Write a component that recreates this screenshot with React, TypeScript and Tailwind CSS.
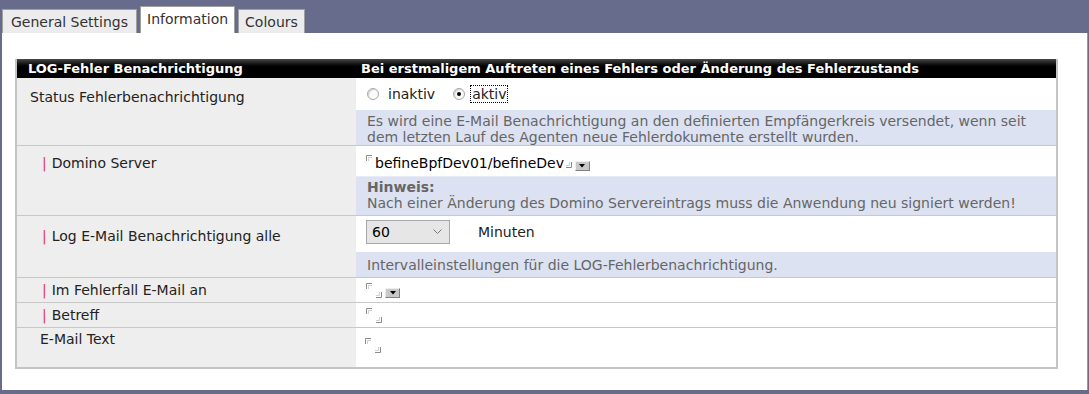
import React from 'react';

const font = { fontFamily: '"DejaVu Sans", Verdana, sans-serif' };

const TopMark = () => (
  <svg width="6" height="6" viewBox="0 0 6 6" className="block shrink-0">
    <path d="M0.5 6V0.5H6" fill="none" stroke="#8a8a8a" />
    <path d="M2.5 6V2.5H6" fill="none" stroke="#d0d0d0" />
  </svg>
);

const EndMark = () => (
  <svg width="6" height="6" viewBox="0 0 6 6" className="block shrink-0">
    <path d="M0 5.5H5.5V0" fill="none" stroke="#8a8a8a" />
    <path d="M0 3.5H3.5V0" fill="none" stroke="#d0d0d0" />
  </svg>
);

const DropBtn = () => (
  <span className="flex items-center justify-center w-[15px] h-[10px] bg-[#c8c8c8] border border-t-[#eeeeee] border-l-[#eeeeee] border-r-[#808080] border-b-[#808080] shrink-0">
    <svg width="6" height="4" viewBox="0 0 6 4" className="block">
      <path d="M0 0H6L3 3.5Z" fill="#000" />
    </svg>
  </span>
);

const EmptyField = ({ drop }: { drop?: boolean }) => (
  <div className="flex h-[15px]">
    <div className="self-start">
      <TopMark />
    </div>
    <div className="self-end ml-[4px]">
      <EndMark />
    </div>
    {drop && (
      <div className="self-end ml-[3px]">
        <DropBtn />
      </div>
    )}
  </div>
);

const Req = () => <span className="text-[#e0405a] mr-[5px]">|</span>;

const Radio = ({ checked }: { checked?: boolean }) => (
  <span className="inline-flex items-center justify-center w-[12px] h-[12px] rounded-full border border-[#a8a8a8] bg-[#fafafa] shadow-[inset_1px_1px_1px_#d0d0d0]">
    {checked && <span className="w-[4px] h-[4px] rounded-full bg-black" />}
  </span>
);

const Desc = ({ children, className = '' }: { children: React.ReactNode; className?: string }) => (
  <div className={`bg-[#dce2f1] text-[#666] text-[14px] leading-[16px] pl-[11px] ${className}`}>{children}</div>
);

const Label = ({ children, className = '' }: { children: React.ReactNode; className?: string }) => (
  <div className={`w-[339px] shrink-0 bg-[#eeeeee] text-[14px] leading-[16px] ${className}`}>{children}</div>
);

export default function App() {
  return (
    <div className="w-[1089px] h-[394px] bg-[#686c8c] overflow-hidden text-[#222]" style={font}>
      {/* Tabs */}
      <div className="flex items-end h-[33px] pl-[2px] gap-[3px]">
        <div className="h-[24px] px-[8px] bg-[#ececec] border border-b-0 border-[#a0a0a0] text-[14px] leading-[24px] text-[#333]">
          General Settings
        </div>
        <div className="h-[27px] px-[6px] bg-white border border-b-0 border-[#a0a0a0] text-[14px] leading-[24px] text-[#333]">
          Information
        </div>
        <div className="h-[24px] px-[6px] bg-[#ececec] border border-b-0 border-[#a0a0a0] text-[14px] leading-[24px] text-[#333]">
          Colours
        </div>
      </div>

      {/* Panel */}
      <div className="ml-[2px] w-[1086px] h-[357px] bg-white border-r border-[#9a9a9a] pt-[26px] pl-[13px]">
        <div className="w-[1043px] border-l-2 border-r-2 border-b-2 border-[#c4c4c4]">
          {/* Header */}
          <div className="flex h-[19px] bg-gradient-to-b from-[#4a4a4a] via-black to-black text-white font-bold text-[13px] leading-[19px]">
            <div className="w-[339px] pl-[11px]">LOG-Fehler Benachrichtigung</div>
            <div className="flex-1 pl-[5px]">Bei erstmaligem Auftreten eines Fehlers oder Änderung des Fehlerzustands</div>
          </div>

          {/* Status */}
          <div className="flex border-b border-[#c8c8c8]">
            <Label className="pl-[13px] pt-[11px]">Status Fehlerbenachrichtigung</Label>
            <div className="flex-1">
              <div className="h-[32px] flex items-center pl-[11px] text-[14px] leading-[16px]">
                <Radio />
                <span className="ml-[9px]">inaktiv</span>
                <span className="ml-[18px] flex">
                  <Radio checked />
                </span>
                <span className="ml-[6px] outline outline-1 outline-dotted outline-black px-[1px]">aktiv</span>
              </div>
              <Desc className="h-[35px] pt-[3px]">
                Es wird eine E-Mail Benachrichtigung an den definierten Empfängerkreis versendet, wenn seit
                <br />
                dem letzten Lauf des Agenten neue Fehlerdokumente erstellt wurden.
              </Desc>
            </div>
          </div>

          {/* Domino Server */}
          <div className="flex border-b border-[#c8c8c8]">
            <Label className="pl-[25px] pt-[9px]">
              <Req />
              Domino Server
            </Label>
            <div className="flex-1">
              <div className="h-[30px] flex items-start pl-[10px] pt-[9px]">
                <TopMark />
                <span className="ml-[3px] text-[14px] leading-[16px] text-black">befineBpfDev01/befineDev</span>
                <div className="ml-[2px] mt-[7px]">
                  <EndMark />
                </div>
                <div className="ml-[3px] mt-[6px]">
                  <DropBtn />
                </div>
              </div>
              <Desc className="h-[39px] pt-[2px] border-t border-[#e8ecf6]">
                <div className="font-bold">Hinweis:</div>
                <div>Nach einer Änderung des Domino Servereintrags muss die Anwendung neu signiert werden!</div>
              </Desc>
            </div>
          </div>

          {/* Log E-Mail */}
          <div className="flex border-b border-[#c8c8c8]">
            <Label className="pl-[25px] pt-[12px]">
              <Req />
              Log E-Mail Benachrichtigung alle
            </Label>
            <div className="flex-1">
              <div className="h-[36px] flex items-start pl-[10px] pt-[4px]">
                <div className="w-[84px] h-[24px] bg-[#e6e6e6] border border-[#a8a8a8] flex items-center justify-between pl-[5px] pr-[7px] text-[14px] text-black">
                  <span>60</span>
                  <svg width="9" height="6" viewBox="0 0 9 6" className="block">
                    <path d="M0.5 0.5L4.5 4.5L8.5 0.5" fill="none" stroke="#777" />
                  </svg>
                </div>
                <span className="ml-[28px] mt-[4px] text-[14px] leading-[16px]">Minuten</span>
              </div>
              <Desc className="h-[25px] pt-[5px]">Intervalleinstellungen für die LOG-Fehlerbenachrichtigung.</Desc>
            </div>
          </div>

          {/* Im Fehlerfall */}
          <div className="flex h-[25px] border-b border-[#c8c8c8]">
            <Label className="pl-[25px] pt-[4px]">
              <Req />
              Im Fehlerfall E-Mail an
            </Label>
            <div className="flex-1 pl-[10px] pt-[5px]">
              <EmptyField drop />
            </div>
          </div>

          {/* Betreff */}
          <div className="flex h-[25px] border-b border-[#c8c8c8]">
            <Label className="pl-[25px] pt-[4px]">
              <Req />
              Betreff
            </Label>
            <div className="flex-1 pl-[10px] pt-[5px]">
              <EmptyField />
            </div>
          </div>

          {/* E-Mail Text */}
          <div className="flex h-[39px]">
            <Label className="pl-[23px] pt-[3px]">E-Mail Text</Label>
            <div className="flex-1 pl-[9px] pt-[10px]">
              <EmptyField />
            </div>
          </div>
        </div>
      </div>
    </div>
  );
}
